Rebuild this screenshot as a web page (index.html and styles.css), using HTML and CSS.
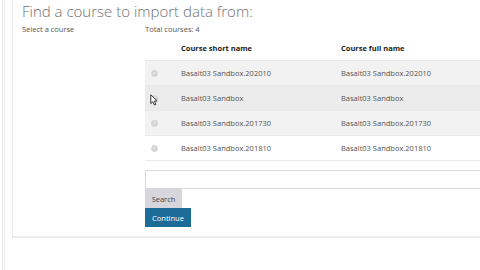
FILE: index.html
```html
<!DOCTYPE html>
<html>
<head>
<meta charset="utf-8">
<link rel="stylesheet" href="styles.css">
</head>
<body>
<div class="rail">
  <div class="rail2">
    <div class="card">
      <h1 class="title">Find a course to import data from:</h1>
      <div class="form">
        <div class="label">Select a course</div>
        <div class="field">
          <div class="total">Total courses: 4</div>
          <table class="courses">
            <colgroup>
              <col class="w-radio">
              <col class="w-short">
              <col class="w-full">
            </colgroup>
            <thead>
              <tr><th class="c-radio"></th><th>Course short name</th><th>Course full name</th></tr>
            </thead>
            <tbody>
              <tr class="odd"><td class="c-radio"><span class="radio"></span></td><td>Basalt03 Sandbox.202010</td><td>Basalt03 Sandbox.202010</td></tr>
              <tr class="hover"><td class="c-radio"><span class="radio"></span><svg class="cursor" width="8" height="12" viewBox="0 0 8 12"><path d="M0.8 0.8 L0.8 9.6 L2.9 7.7 L4.4 11 L5.9 10.3 L4.4 7.1 L7.1 6.9 Z" fill="#fff" stroke="#222" stroke-width="0.9" stroke-linejoin="round"/></svg></td><td>Basalt03 Sandbox</td><td>Basalt03 Sandbox</td></tr>
              <tr class="odd"><td class="c-radio"><span class="radio"></span></td><td>Basalt03 Sandbox.201730</td><td>Basalt03 Sandbox.201730</td></tr>
              <tr><td class="c-radio"><span class="radio"></span></td><td>Basalt03 Sandbox.201810</td><td>Basalt03 Sandbox.201810</td></tr>
            </tbody>
          </table>
          <div class="search">
            <input class="search-input" type="text">
            <button class="btn-search">Search</button>
          </div>
          <button class="btn-continue">Continue</button>
        </div>
      </div>
    </div>
  </div>
</div>
</body>
</html>
```
FILE: styles.css
```css
html, body {
  margin: 0;
  padding: 0;
  background: #ffffff;
  overflow: hidden;
  width: 480px;
  height: 270px;
}
body {
  font-family: "Open Sans", "Noto Sans", sans-serif;
  color: #4a4a4a;
}
.rail {
  margin-left: 2px;
  border-left: 1px solid #e6e6e6;
  height: 270px;
}
.rail2 {
  margin-left: 1px;
  border-left: 1px solid #ececec;
  height: 270px;
  padding-left: 7px;
}
.card {
  border-left: 1px solid #e8e8e8;
  border-bottom: 2px solid #ececec;
  padding-left: 9px;
  height: 236px;
  overflow: hidden;
}
.title {
  margin: 0;
  padding: 0;
  font-size: 15px;
  line-height: 22px;
  font-weight: 300;
  color: #707070;
  white-space: nowrap;
}
.form {
  display: flex;
  margin-top: 0;
}
.label {
  width: 123px;
  flex: none;
  font-size: 7.5px;
  line-height: 12px;
  padding-top: 1px;
  color: #555;
}
.field {
  flex: none;
  width: 400px;
}
.total {
  font-size: 7.5px;
  line-height: 12px;
  padding-top: 1px;
  color: #555;
}
.courses {
  border-collapse: collapse;
  table-layout: fixed;
  width: 400px;
  font-size: 7.5px;
}
.w-radio { width: 27px; }
.w-short { width: 160px; }
.w-full { width: 213px; }
.courses th {
  text-align: left;
  font-weight: 700;
  color: #222;
  height: 25px;
  padding: 0 9px;
  vertical-align: middle;
  white-space: nowrap;
}
.courses td {
  height: 24px;
  padding: 0 9px;
  border-top: 1px solid #e8e8e8;
  color: #555;
  vertical-align: middle;
  white-space: nowrap;
}
.courses tbody tr:last-child td {
  border-bottom: 1px solid #eaeaea;
}
.courses .c-radio {
  padding-left: 6px;
  position: relative;
}
.courses tr.odd td {
  background: #f2f2f2;
}
.courses tr.hover td {
  background: #ececec;
}
.radio {
  display: block;
  width: 5px;
  height: 5px;
  border-radius: 50%;
  background: radial-gradient(circle at 50% 40%, #e6e6e6, #c6c6c6);
  border: 1px solid #d4d4d4;
}
.cursor {
  position: absolute;
  left: 5px;
  top: 8px;
}
.search {
  margin-top: 9px;
}
.search-input {
  display: block;
  box-sizing: border-box;
  width: 400px;
  height: 19px;
  margin: 0;
  border: 1px solid #d8d8d8;
  background: #fff;
  outline: none;
}
.btn-search {
  display: block;
  margin: 0;
  height: 19px;
  width: 37px;
  border: 0;
  padding: 0;
  background: #d6d6dc;
  color: #444;
  font-family: "Open Sans", "Noto Sans", sans-serif;
  font-size: 7.5px;
}
.btn-continue {
  display: block;
  margin: 0;
  height: 19px;
  width: 46px;
  border: 0;
  padding: 0;
  background: #1d6c98;
  color: #fff;
  font-family: "Open Sans", "Noto Sans", sans-serif;
  font-size: 7.5px;
}
```
